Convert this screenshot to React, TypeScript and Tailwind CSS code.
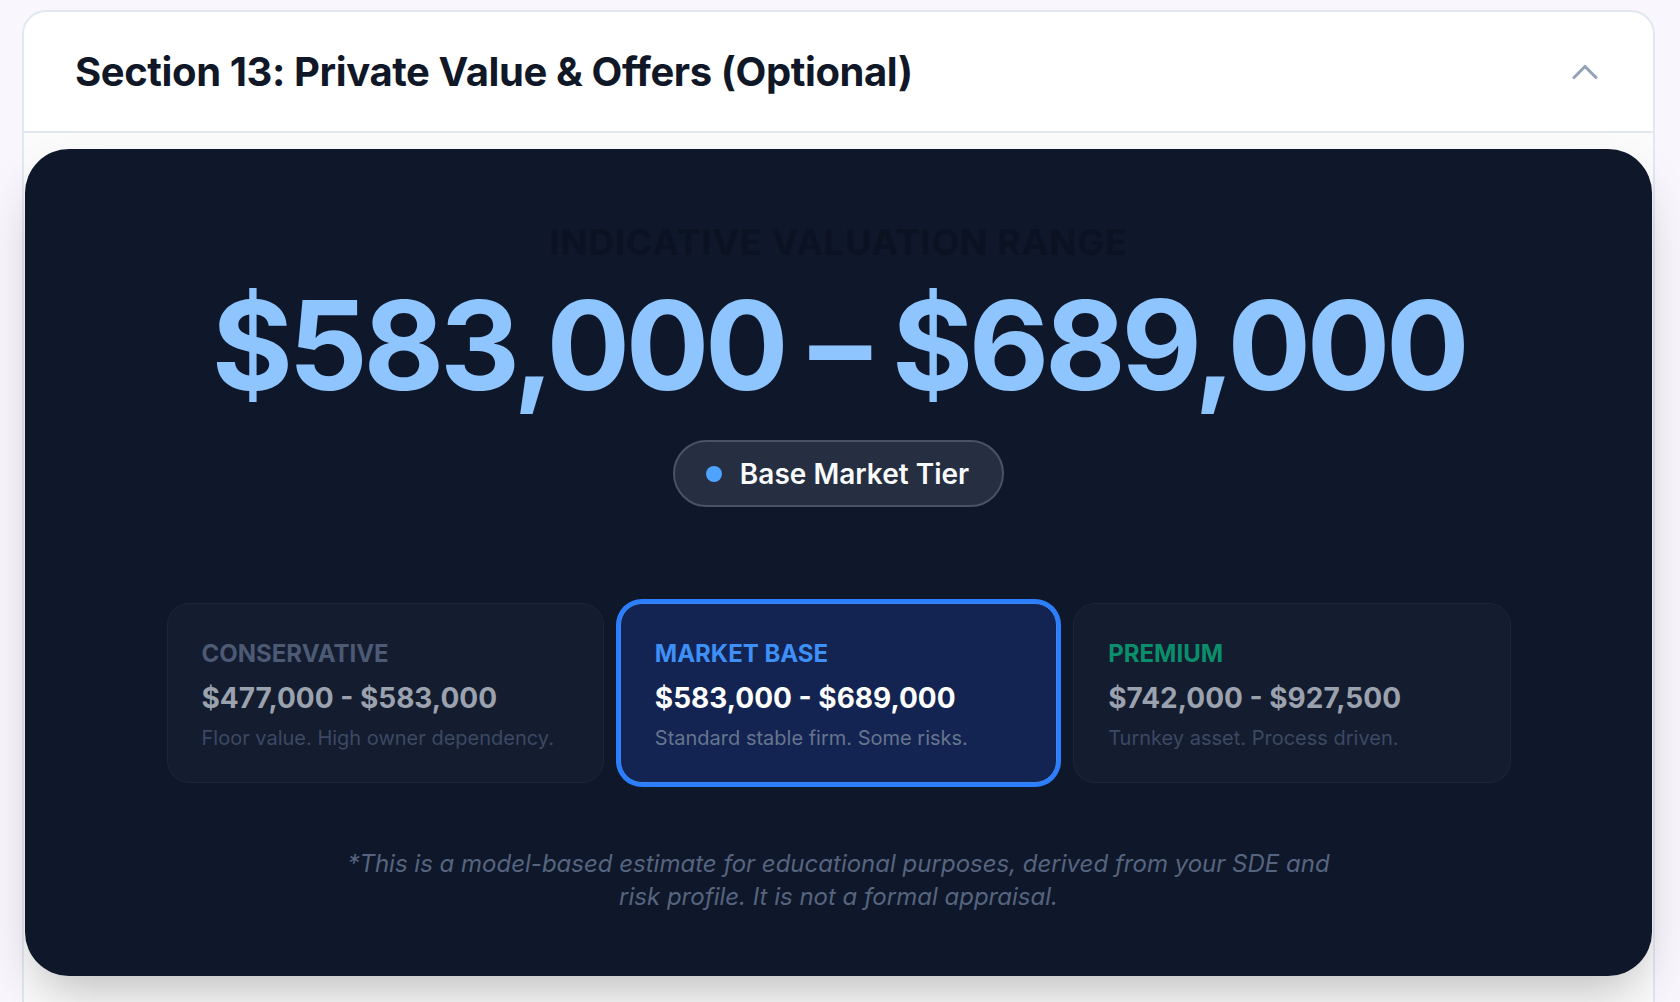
import React from 'react';
import { ChevronUp } from 'lucide-react';

type Tier = {
  id: string;
  label: string;
  range: string;
  note: string;
  active?: boolean;
};

const tiers: Tier[] = [
  {
    id: 'conservative',
    label: 'Conservative',
    range: '$477,000 - $583,000',
    note: 'Floor value. High owner dependency.',
  },
  {
    id: 'market',
    label: 'Market Base',
    range: '$583,000 - $689,000',
    note: 'Standard stable firm. Some risks.',
    active: true,
  },
  {
    id: 'premium',
    label: 'Premium',
    range: '$742,000 - $927,500',
    note: 'Turnkey asset. Process driven.',
  },
];

const labelColor: Record<string, string> = {
  conservative: 'text-[#4c5a74]',
  market: 'text-[#3f90f6]',
  premium: 'text-[#0b8f6a]',
};

function TierCard({ tier }: { tier: Tier }) {
  return (
    <div
      className={
        tier.active
          ? 'rounded-[22px] border border-[#3b86f0] bg-[#132452] px-[34px] pt-[33px] pb-[28px] ring-4 ring-[#2b7fff]'
          : 'rounded-[22px] border border-[#1c2639] bg-[#141c30] px-[34px] pt-[33px] pb-[28px]'
      }
    >
      <div className={`text-[24px] leading-[34px] font-bold uppercase ${labelColor[tier.id]}`}>
        {tier.label}
      </div>
      <div
        className={`mt-[8px] text-[28px] leading-[38px] font-bold ${
          tier.active ? 'text-white' : 'text-[#9ba2ae]'
        }`}
      >
        {tier.range}
      </div>
      <div
        className={`mt-[5px] whitespace-nowrap text-[20px] leading-[32px] ${
          tier.active ? 'text-[#66758d]' : 'text-[#3c4962]'
        }`}
      >
        {tier.note}
      </div>
    </div>
  );
}

export default function App() {
  return (
    <div
      className="min-h-screen overflow-hidden bg-[#f9f6fe] pt-[10px] pl-[22px] pr-[25px]"
      style={{ fontFamily: 'Inter, "Noto Sans", sans-serif' }}
    >
      <div className="rounded-t-[24px] border-2 border-b-0 border-[#e2e8f1] bg-white">
        {/* Header */}
        <div className="flex h-[121px] items-center justify-between border-b-2 border-[#e2e8f0] pl-[51px] pr-[46px]">
          <h2 className="text-[40px] font-bold tracking-[-0.01em] text-[#101828]">
            Section 13: Private Value &amp; Offers (Optional)
          </h2>
          <ChevronUp size={44} strokeWidth={1.7} className="text-[#94a3b8]" />
        </div>

        {/* Body */}
        <div className="bg-[#fbfbfb] px-[1px] pt-[16px] pb-[60px]">
          <div className="rounded-[44px] bg-[#0f172a] pt-[75px] pb-[63px] shadow-2xl">
            <div className="text-center text-[36px] leading-[36px] font-bold uppercase tracking-[0.02em] text-[#0b1222]">
              Indicative Valuation Range
            </div>

            <div className="mt-[23px] text-center text-[124px] leading-[124px] font-bold tracking-[-0.035em] text-[#8ec5ff]">
              $583,000 – $689,000
            </div>

            <div className="mt-[33px] flex justify-center">
              <div className="flex h-[67px] items-center gap-[18px] rounded-full border-2 border-[#4a5263] bg-[#262e41] pl-[31px] pr-[33px]">
                <span className="h-[16px] w-[16px] rounded-full bg-[#4ea3ff]" />
                <span className="text-[28px] font-semibold text-[#f8fafc]">Base Market Tier</span>
              </div>
            </div>

            <div className="mx-auto mt-[96px] grid max-w-[1344px] grid-cols-3 gap-4">
              {tiers.map((t) => (
                <TierCard key={t.id} tier={t} />
              ))}
            </div>

            <p className="mx-auto mt-[64px] max-w-[1000px] text-center text-[24px] leading-[33px] italic text-[#56657f]">
              *This is a model-based estimate for educational purposes, derived from your SDE and risk
              profile. It is not a formal appraisal.
            </p>
          </div>
        </div>
      </div>
    </div>
  );
}
